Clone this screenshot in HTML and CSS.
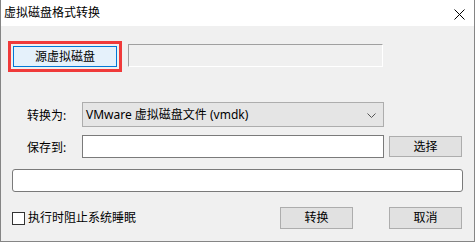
FILE: index.html
```html
<!DOCTYPE html>
<html lang="zh-CN">
<head>
<meta charset="utf-8">
<title>虚拟磁盘格式转换</title>
<link rel="stylesheet" href="styles.css">
</head>
<body>
<div class="window">
  <div class="titlebar">
    <span class="title">虚拟磁盘格式转换</span>
    <span class="close">
      <svg width="11" height="11" viewBox="0 0 11 11"><path d="M0.5 0.5 L10.5 10.5 M10.5 0.5 L0.5 10.5" stroke="#000" stroke-width="1" fill="none"/></svg>
    </span>
  </div>
  <div class="content">
    <div class="row row-source">
      <div class="highlight"><button class="btn btn-focus src-btn">源虚拟磁盘</button></div>
      <div class="field-disabled"></div>
    </div>
    <div class="row row-combo">
      <label class="label">转换为:</label>
      <div class="combo">
        <span class="combo-text">VMware 虚拟磁盘文件 (vmdk)</span>
        <svg class="chev" width="9" height="5" viewBox="0 0 9 5"><path d="M0.5 0.5 L4.5 4.5 L8.5 0.5" stroke="#555" stroke-width="1" fill="none"/></svg>
      </div>
    </div>
    <div class="row row-save">
      <label class="label">保存到:</label>
      <div class="input"></div>
      <button class="btn pick-btn">选择</button>
    </div>
    <div class="progress"></div>
    <div class="row row-bottom">
      <span class="check"></span>
      <span class="check-label">执行时阻止系统睡眠</span>
      <button class="btn act-btn">转换</button>
      <button class="btn act-btn cancel">取消</button>
    </div>
  </div>
</div>
</body>
</html>
```

FILE: styles.css
```css
* { box-sizing: border-box; }
html, body { margin: 0; padding: 0; background: #f0f0f0; }
body {
  font-family: "Noto Sans", "Noto Sans CJK SC", sans-serif;
  font-size: 12px;
  color: #000;
}
.window {
  width: 475px;
  height: 242px;
  border: 1px solid #858585;
  border-top: none;
  background: #f0f0f0;
  display: flex;
  flex-direction: column;
}
.titlebar {
  height: 26px;
  background: #fff;
  display: flex;
  align-items: center;
  justify-content: space-between;
  padding-left: 3px;
  padding-right: 9px;
}
.title { line-height: 16px; }
.close { display: flex; margin-top: 2px; }
.content {
  padding-left: 11px;
  display: flex;
  flex-direction: column;
}
.row { display: flex; }
.btn {
  font-family: inherit;
  font-size: 12px;
  color: #000;
  background: #e1e1e1;
  border: 1px solid #adadad;
  padding: 0;
  margin: 0;
  height: 22px;
  line-height: 18px;
}
.row-source { margin-top: 15px; margin-left: -4px; align-items: flex-start; }
.highlight {
  border: 3px solid #f03a3a;
  padding: 2px;
  width: 114px;
  height: 31px;
}
.btn-focus { background: #e5f1fb; border-color: #0078d7; }
.src-btn { width: 104px; height: 21px; }
.field-disabled {
  margin-left: 6px;
  margin-top: 3px;
  width: 255px;
  height: 23px;
  border: 1px solid #a0a0a0;
  border-right-color: #fff;
  border-bottom-color: #fff;
  background: #f0f0f0;
}
.label {
  width: 70px;
  padding-left: 15px;
}
.row-combo { margin-top: 30px; align-items: center; }
.combo {
  width: 302px;
  height: 25px;
  background: #e5e5e5;
  border: 1px solid #adadad;
  display: flex;
  align-items: center;
  justify-content: space-between;
  padding-left: 3px;
  padding-right: 7px;
}
.combo-text { line-height: 16px; }
.chev { margin-top: 1px; }
.row-save { margin-top: 8px; align-items: center; }
.input {
  width: 302px;
  height: 23px;
  background: #fff;
  border: 1px solid #7a7a7a;
}
.pick-btn { margin-left: 5px; width: 73px; height: 21px; }
.progress {
  margin-top: 11px;
  width: 451px;
  height: 23px;
  background: #fff;
  border: 1px solid #7a7a7a;
  border-radius: 3px;
}
.row-bottom { margin-top: 15px; align-items: center; }
.check {
  width: 13px;
  height: 13px;
  border: 1px solid #333;
  background: #fff;
}
.check-label { margin-left: 3px; line-height: 16px; }
.act-btn { width: 73px; height: 22px; margin-left: auto; }
.row-bottom .act-btn:first-of-type { margin-left: 144px; }
.cancel { margin-left: 36px; }
```
